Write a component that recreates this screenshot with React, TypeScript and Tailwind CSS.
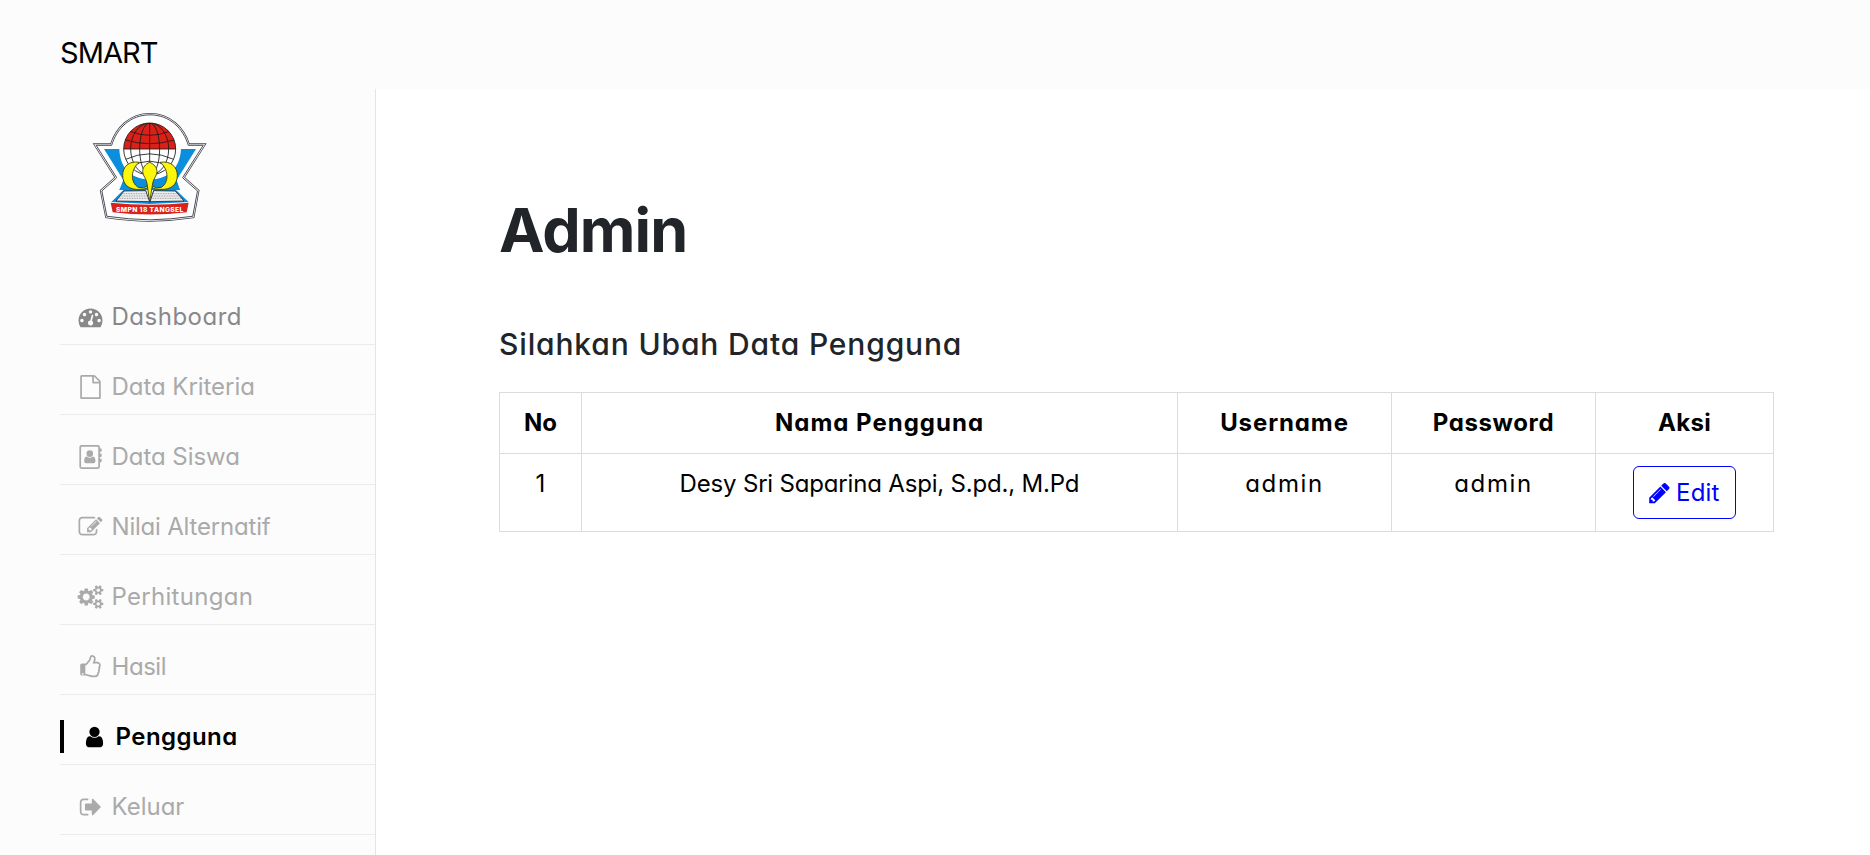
import type { ReactNode } from "react";

const paths = {
  dashboard:
    "M384 1152q0-53-37.5-90.5t-90.5-37.5-90.5 37.5-37.5 90.5 37.5 90.5 90.5 37.5 90.5-37.5 37.5-90.5zm192-448q0-53-37.5-90.5t-90.5-37.5-90.5 37.5-37.5 90.5 37.5 90.5 90.5 37.5 90.5-37.5 37.5-90.5zm428 481l101-382q6-26-7.5-48.5t-38.5-29.5-48 6.5-30 39.5l-101 382q-60 5-107 43.5t-63 98.5q-20 77 20 146t117 89 146-20 89-117q16-60-6-117t-72-91zm660-33q0-53-37.5-90.5t-90.5-37.5-90.5 37.5-37.5 90.5 37.5 90.5 90.5 37.5 90.5-37.5 37.5-90.5zm-640-640q0-53-37.5-90.5t-90.5-37.5-90.5 37.5-37.5 90.5 37.5 90.5 90.5 37.5 90.5-37.5 37.5-90.5zm448 192q0-53-37.5-90.5t-90.5-37.5-90.5 37.5-37.5 90.5 37.5 90.5 90.5 37.5 90.5-37.5 37.5-90.5zm320 448q0 261-141 483-19 29-54 29h-1402q-35 0-54-29-141-221-141-483 0-182 71-348t191-286 286-191 348-71 348 71 286 191 191 286 71 348z",
  file: "M1468 380q28 28 48 76t20 88v1152q0 40-28 68t-68 28h-1344q-40 0-68-28t-28-68v-1600q0-40 28-68t68-28h896q40 0 88 20t76 48zm-444-244v376h376q-10-29-22-41l-313-313q-12-12-41-22zm384 1528v-1024h-416q-40 0-68-28t-28-68v-416h-768v1536h1280z",
  book: "M160 0H1380Q1540 0 1540 160V256H1616Q1664 256 1664 304V464Q1664 512 1616 512H1540V640H1616Q1664 640 1664 688V848Q1664 896 1616 896H1540V1024H1616Q1664 1024 1664 1072V1232Q1664 1280 1616 1280H1540V1632Q1540 1792 1380 1792H160Q0 1792 0 1632V160Q0 0 160 0ZM160 128Q128 128 128 160V1632Q128 1664 160 1664H1380Q1412 1664 1412 1632V160Q1412 128 1380 128ZM1030 640A250 250 0 1 1 530 640A250 250 0 1 1 1030 640ZM570 856Q660 950 780 950T990 856Q1200 860 1200 1200Q1200 1370 1070 1370H490Q360 1370 360 1200Q360 860 570 856Z",
  edit: "M888 1184l116-116-152-152-116 116v56h96v96h56zm440-720q-16-16-33 1l-350 350q-17 17-1 33t33-1l350-350q17-17 1-33zm80 594v190q0 119-84.5 203.5t-203.5 84.5h-832q-119 0-203.5-84.5t-84.5-203.5v-832q0-119 84.5-203.5t203.5-84.5h832q63 0 117 25 15 7 18 23 3 17-9 29l-49 49q-14 14-32 8-23-6-45-6h-832q-66 0-113 47t-47 113v832q0 66 47 113t113 47h832q66 0 113-47t47-113v-126q0-13 9-22l64-64q15-15 35-7t20 29zm-96-738l288 288-672 672h-288v-288zm444 132l-92 92-288-288 92-92q28-28 68-28t68 28l152 152q28 28 28 68t-28 68z",
  cogs: "M896 896q0-106-75-181t-181-75-181 75-75 181 75 181 181 75 181-75 75-181zm768 512q0-52-38-90t-90-38-90 38-38 90q0 53 37.5 90.5t90.5 37.5 90.5-37.5 37.5-90.5zm0-1024q0-52-38-90t-90-38-90 38-38 90q0 53 37.5 90.5t90.5 37.5 90.5-37.5 37.5-90.5zm-384 421v185q0 10-7 19.5t-16 10.5l-155 24q-11 35-32 76 34 48 90 115 7 11 7 20 0 12-7 19-23 30-82.5 89.5t-78.5 59.5q-11 0-21-7l-115-90q-37 19-77 31-11 108-23 155-7 24-30 24h-186q-11 0-20-7.5t-10-17.5l-23-153q-34-10-75-31l-118 89q-7 7-20 7-11 0-21-8-144-133-144-160 0-9 7-19 10-14 41-53t47-61q-23-44-35-82l-152-24q-10-1-17-9.5t-7-19.5v-185q0-10 7-19.5t16-10.5l155-24q11-35 32-76-34-48-90-115-7-11-7-20 0-12 7-20 22-30 82-89t79-59q11 0 21 7l115 90q34-18 77-32 11-108 23-154 7-24 30-24h186q11 0 20 7.5t10 17.5l23 153q34 10 75 31l118-89q8-7 20-7 11 0 21 8 144 133 144 160 0 8-7 19-12 16-42 54t-45 60q23 48 34 82l152 23q10 2 17 10.5t7 19.5zm640 533v140q0 16-149 31-12 27-30 52 51 113 51 138 0 4-4 7-122 71-124 71-8 0-46-47t-52-68q-20 2-30 2t-30-2q-14 21-52 68t-46 47q-2 0-124-71-4-3-4-7 0-25 51-138-18-25-30-52-149-15-149-31v-140q0-16 149-31 13-29 30-52-51-113-51-138 0-4 4-7 4-2 35-20t59-34 30-16q8 0 46 46.5t52 67.5q20-2 30-2t30 2q51-71 92-112l6-2q4 0 124 70 4 3 4 7 0 25-51 138 17 23 30 52 149 15 149 31zm0-1024v140q0 16-149 31-12 27-30 52 51 113 51 138 0 4-4 7-122 71-124 71-8 0-46-47t-52-68q-20 2-30 2t-30-2q-14 21-52 68t-46 47q-2 0-124-71-4-3-4-7 0-25 51-138-18-25-30-52-149-15-149-31v-140q0-16 149-31 13-29 30-52-51-113-51-138 0-4 4-7 4-2 35-20t59-34 30-16q8 0 46 46.5t52 67.5q20-2 30-2t30 2q51-71 92-112l6-2q4 0 124 70 4 3 4 7 0 25-51 138 17 23 30 52 149 15 149 31z",
  thumb:
    "M256 1408q0-26-19-45t-45-19-45 19-19 45 19 45 45 19 45-19 19-45zm1152-640q0-51-39-89.5t-89-38.5h-352q0-58 48-159.5t48-160.5q0-98-32-145t-128-47q-26 26-38 85t-30.5 125.5-59.5 109.5q-22 23-77 91-4 5-23 30t-31.5 41-34.5 42.5-40 44-38.5 35.5-40 27-35.5 9h-32v640h32q13 0 31.5 3t33 6.5 38 11 35 11.5 35.5 12.5 29 10.5q211 73 342 73h121q192 0 192-167 0-26-5-56 30-16 47.5-52.5t17.5-73.5-18-69q53-50 53-119 0-25-10-55.5t-25-47.5q32-1 53.5-47t21.5-81zm128-1q0 89-49 163 9 33 9 69 0 77-38 144 3 21 3 43 0 101-60 178 1 139-85 219.5t-227 80.5h-129q-96 0-189.5-22.5t-216.5-65.5q-116-40-138-40h-288q-53 0-90.5-37.5t-37.5-90.5v-640q0-53 37.5-90.5t90.5-37.5h274q36-24 137-155 58-75 107-128 24-25 35.5-85.5t30.5-126.5 62-108q39-37 90-37 84 0 151 32.5t102 101.5 35 186q0 93-48 192h176q104 0 180 76t76 179z",
  user: "M1536 1399q0 109-62.5 187t-150.5 78h-854q-88 0-150.5-78t-62.5-187q0-85 8.5-160.5t31.5-152 58.5-131 94-89 134.5-34.5q131 128 313 128t313-128q76 0 134.5 34.5t94 89 58.5 131 31.5 152 8.5 160.5zm-256-887q0 159-112.5 271.5t-271.5 112.5-271.5-112.5-112.5-271.5 112.5-271.5 271.5-112.5 271.5 112.5 112.5 271.5z",
  signOut:
    "M640 1440q0 4 1 20t.5 26.5-3 23.5-10 19.5-20.5 6.5h-320q-119 0-203.5-84.5t-84.5-203.5v-704q0-119 84.5-203.5t203.5-84.5h320q13 0 22.5 9.5t9.5 22.5q0 4 1 20t.5 26.5-3 23.5-10 19.5-20.5 6.5h-320q-66 0-113 47t-47 113v704q0 66 47 113t113 47h312l11.5 1 11.5 3 8 5.5 7 9 2 13.5zm928-544q0 26-19 45l-544 544q-19 19-45 19t-45-19-19-45v-288h-448q-26 0-45-19t-19-45v-384q0-26 19-45t45-19h448v-288q0-26 19-45t45-19 45 19l544 544q19 19 19 45z",
  pencil:
    "M491 1536l91-91-235-235-91 91v107h128v128h107zm523-928q0-22-22-22-10 0-17 7l-542 542q-7 7-7 17 0 22 22 22 10 0 17-7l542-542q7-7 7-17zm-54-192l416 416-832 832h-416v-416zm683 96q0 53-37 90l-166 166-416-416 166-165q36-38 90-38 53 0 91 38l235 234q37 39 37 91z",
};

type IconName = keyof typeof paths;

const iconWidth: Record<IconName, number> = {
  dashboard: 1792,
  file: 1536,
  book: 1664,
  edit: 1792,
  cogs: 1920,
  thumb: 1536,
  user: 1792,
  signOut: 1600,
  pencil: 1792,
};

function Icon({ name }: { name: IconName }) {
  return (
    <svg
      viewBox={`0 0 ${iconWidth[name]} 1792`}
      className="h-6 w-[31px] shrink-0"
      fill="currentColor"
      fillRule={name === "book" ? "evenodd" : "nonzero"}
      aria-hidden="true"
    >
      <path d={paths[name]} />
    </svg>
  );
}

function Logo() {
  const outline =
    "M40 134H89C105 82 148 40 210 40S315 82 331 134H378L313 234L360 275L345 353Q275 363 210 364Q145 363 74 353L58 275L105 234Z";
  return (
    <svg viewBox="0 0 420 405" className="ml-5 h-[135px] w-[140px]" aria-label="SMPN 18 Tangsel">
      <defs>
        <clipPath id="globe">
          <circle cx="209" cy="147" r="78" />
        </clipPath>
      </defs>
      <g transform="translate(209 203) scale(0.95 0.972) translate(-209 -203)">
        <path d={outline} fill="#fff" stroke="#45454f" strokeWidth="12" />
        <path d={outline} fill="#fff" stroke="#fff" strokeWidth="7" />
        <path d={outline} fill="#fff" stroke="#45454f" strokeWidth="3" />
      </g>
      <path d="M72 147H118C120 205 155 240 209 240S300 205 303 147H348L290 240L300 270H118L130 240Z" fill="#0b8fdc" />
      <circle cx="209" cy="147" r="84" fill="#fff" />
      <g clipPath="url(#globe)">
        <rect x="130" y="68" width="160" height="79" fill="#dc2018" />
        <g fill="none" stroke="#1c1c1c" strokeWidth="2.6">
          <path d="M209 68V226M131 147H287M150 94Q209 118 268 94M136 120Q209 142 282 120M137 178Q209 145 281 178M150 202Q209 165 268 202" />
          <ellipse cx="209" cy="147" rx="30" ry="78" />
          <ellipse cx="209" cy="147" rx="57" ry="78" />
        </g>
      </g>
      <circle cx="209" cy="147" r="78" fill="none" stroke="#1c1c1c" strokeWidth="2.6" />
      <path d="M150 222Q209 255 270 222L300 270H118Z" fill="#0b8fdc" />
      <g fill="#fbf60a" stroke="#3a3a10" strokeWidth="2.6">
        <path d="M178 187C145 181 128 202 128 226C128 254 148 271 180 268Q205 268 206 256Q190 268 175 262C148 246 154 204 178 187Z" />
        <path d="M240 187C273 181 292 202 292 226C292 254 272 271 240 268Q214 268 213 256Q229 268 244 262C270 246 264 204 240 187Z" />
      </g>
      <path d="M130 270H198L209 306L220 270H288L326 306L210 312L94 306Z" fill="#0b8fdc" />
      <path d="M132 273L197 272L209 305L108 303Z" fill="#eee" stroke="#222" strokeWidth="2.4" />
      <path d="M286 273L221 272L210 305L312 303Z" fill="#eee" stroke="#222" strokeWidth="2.4" />
      <path
        d="M128 281H198M122 288H201M116 295H203M219 281H292M217 288H299M215 295H305"
        stroke="#777"
        strokeWidth="2"
        strokeDasharray="3 2"
      />
      <path
        d="M209 187C222 192 231 203 231 215C231 228 218 237 217 256L209 307L202 256C201 237 188 228 188 215C188 203 196 192 209 187Z"
        fill="#fbf60a"
        stroke="#3a3a10"
        strokeWidth="2.6"
      />
      <path d="M92 308Q209 320 326 308L320 337Q209 350 98 337Z" fill="#d9221c" />
      <text
        x="209"
        y="335"
        textAnchor="middle"
        textLength="202"
        lengthAdjust="spacing"
        fill="#fff"
        className="font-[Inter,sans-serif] text-[20px] font-extrabold"
      >
        SMPN 18 TANGSEL
      </text>
    </svg>
  );
}

const items: { icon: IconName; label: string; tone: string }[] = [
  { icon: "dashboard", label: "Dashboard", tone: "text-[#888888] tracking-[0.5px]" },
  { icon: "file", label: "Data Kriteria", tone: "text-[#aaaaaa] tracking-[-0.05px]" },
  { icon: "book", label: "Data Siswa", tone: "text-[#aaaaaa] tracking-[-0.05px]" },
  { icon: "edit", label: "Nilai Alternatif", tone: "text-[#aaaaaa] tracking-[-0.2px]" },
  { icon: "cogs", label: "Perhitungan", tone: "text-[#aaaaaa] tracking-[0.3px]" },
  { icon: "thumb", label: "Hasil", tone: "text-[#aaaaaa] tracking-[-0.45px]" },
  { icon: "user", label: "Pengguna", tone: "border-l-4 border-black text-black font-semibold tracking-[0.45px]" },
  { icon: "signOut", label: "Keluar", tone: "text-[#aaaaaa] tracking-[0px]" },
];

function Cell({ children, className = "" }: { children: ReactNode; className?: string }) {
  return (
    <td className={`border border-[#dcdcdc] p-0 pt-3 text-center align-top leading-9 ${className}`}>{children}</td>
  );
}

export default function App() {
  return (
    <div className="h-[855px] w-full overflow-hidden bg-white font-[Inter,sans-serif] text-2xl text-black [font-feature-settings:'cv11'_1]">
      <header className="flex h-[89px] items-center bg-[#fcfcfc] pt-4 pl-[60px] text-[29px] leading-9 tracking-[-0.9px]">
        <span>SMART</span>
      </header>
      <div className="flex h-[766px]">
        <aside className="w-[376px] shrink-0 overflow-hidden border-r border-[#e5e5e5] bg-[#fcfcfc] pt-[11px] pl-[60px]">
          <Logo />
          <nav className="mt-10">
            {items.map(({ icon, label, tone }) => (
              <a key={label} className="block h-[70px] border-b border-[#ebebeb] pt-[25px]">
                <div className={`flex h-[33px] items-center pl-[15px] leading-[33px] ${tone}`}>
                  <Icon name={icon} />
                  <span className="ml-[5.5px]">{label}</span>
                </div>
              </a>
            ))}
          </nav>
        </aside>
        <main className="flex-1 pt-[105px] pl-[123px]">
          <h1 className="text-[61px] leading-[72px] font-bold tracking-[-0.9px] text-[#212529]">Admin</h1>
          <h2 className="mt-[60px] text-[30px] leading-9 font-medium tracking-[0.85px] text-[#212529]">
            Silahkan Ubah Data Pengguna
          </h2>
          <table className="mt-[30px] w-[1275px] table-fixed border-collapse">
            <colgroup>
              <col className="w-[82px]" />
              <col className="w-[596px]" />
              <col className="w-[214px]" />
              <col className="w-[204px]" />
              <col className="w-[178px]" />
            </colgroup>
            <tbody>
              <tr className="h-[61px] font-bold">
                <Cell>No</Cell>
                <Cell className="tracking-[1px]">Nama Pengguna</Cell>
                <Cell className="tracking-[0.9px]">Username</Cell>
                <Cell className="tracking-[0.6px]">Password</Cell>
                <Cell className="tracking-[0.3px]">Aksi</Cell>
              </tr>
              <tr className="h-[78px]">
                <Cell>1</Cell>
                <Cell className="tracking-[-0.18px]">Desy Sri Saparina Aspi, S.pd., M.Pd</Cell>
                <Cell className="tracking-[1.6px]">admin</Cell>
                <Cell className="tracking-[1.6px]">admin</Cell>
                <Cell>
                  <button className="inline-flex h-[53px] w-[103px] items-center rounded-md border border-[#0000ff] pl-2.5 text-[#0000ff]">
                    <Icon name="pencil" />
                    <span className="ml-px tracking-[0.2px]">Edit</span>
                  </button>
                </Cell>
              </tr>
            </tbody>
          </table>
        </main>
      </div>
    </div>
  );
}
